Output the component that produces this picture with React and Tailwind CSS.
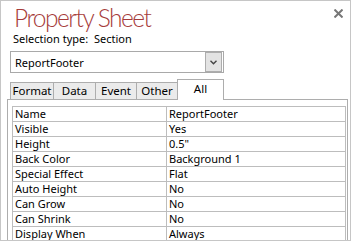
import React from 'react'

const rows = [
  ['Name', 'ReportFooter'],
  ['Visible', 'Yes'],
  ['Height', '0.5"'],
  ['Back Color', 'Background 1'],
  ['Special Effect', 'Flat'],
  ['Auto Height', 'No'],
  ['Can Grow', 'No'],
  ['Can Shrink', 'No'],
  ['Display When', 'Always'],
]

const tabs = ['Format', 'Data', 'Event', 'Other']
const tabWidths = ['w-[44px]', 'w-[43px]', 'w-[42px]', 'w-[42px]']

export default function App() {
  return (
    <div className="w-[351px] h-[241px] overflow-hidden bg-white border border-[#c6c6c6] font-['Noto_Sans',sans-serif] text-[11px] text-black">
      {/* Header */}
      <div className="flex justify-between items-start h-[31px]">
        <h1 className="ml-[13px] mt-[4px] font-['Lato',sans-serif] font-light text-[24.5px] leading-[25px] text-[#a63c3b] tracking-[-1.5px]">
          Property Sheet
        </h1>
        <svg className="mt-[8px] mr-[7px]" width="9" height="9" viewBox="0 0 9 9">
          <path d="M0.5 0.5 L8.5 8.5 M8.5 0.5 L0.5 8.5" stroke="#777" strokeWidth="2" />
        </svg>
      </div>

      {/* Selection type */}
      <div className="ml-[12px] h-[19px] leading-[14px]">
        Selection type:&nbsp;&nbsp;Section
      </div>

      {/* Combo box */}
      <div className="ml-[9px] w-[214px] h-[22px] border border-[#a9a9a9] flex items-center">
        <span className="flex-1 pl-[4px] leading-none">ReportFooter</span>
        <div className="w-[17px] h-[20px] mr-[1px] bg-[#e3e3e3] border border-[#adadad] flex items-center justify-center">
          <svg width="7" height="5" viewBox="0 0 7 5">
            <path d="M0.5 0.8 L3.5 3.8 L6.5 0.8" fill="none" stroke="#444" strokeWidth="1.4" />
          </svg>
        </div>
      </div>

      {/* Tabs */}
      <div className="ml-[9px] mt-[5px] flex items-end h-[21px] text-[11.5px]">
        {tabs.map((t, i) => (
          <div
            key={t}
            className={`${tabWidths[i]} h-[17px] bg-[#ebebeb] border border-b-0 border-[#adadad] -ml-px first:ml-0 flex items-center justify-center leading-none`}
          >
            {t}
          </div>
        ))}
        <div className="w-[47px] h-[21px] bg-white border border-b-0 border-[#adadad] -ml-px -mb-px relative z-10 flex items-start justify-center pt-[3px] leading-none">
          All
        </div>
      </div>

      {/* Panel */}
      <div className="ml-[6px] w-[341px] h-[160px] border border-[#adadad] pt-[6px] pl-[4px] pr-[1px]">
        <div className="border border-[#bdbdbd]">
          {rows.map(([k, v]) => (
            <div key={k} className="flex h-[15px] border-b border-[#bdbdbd] last:border-b-0 leading-[13px]">
              <div className="w-[154px] pl-[2px] border-r border-[#bdbdbd]">{k}</div>
              <div className="flex-1 pl-[2px]">{v}</div>
            </div>
          ))}
        </div>
      </div>
    </div>
  )
}
